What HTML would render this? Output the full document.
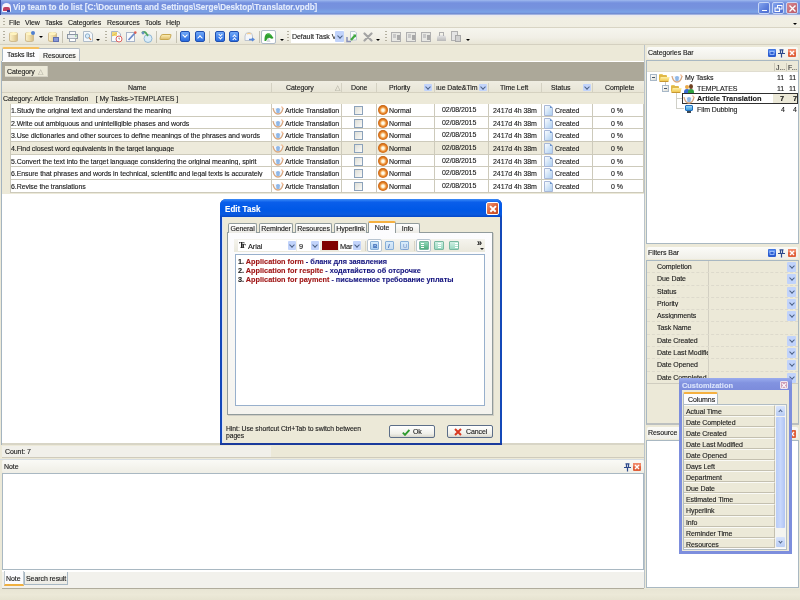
<!DOCTYPE html>
<html><head><meta charset="utf-8">
<style>
*{margin:0;padding:0;box-sizing:border-box}
html,body{width:800px;height:600px;overflow:hidden;background:#ECE9D8;font-family:"Liberation Sans",sans-serif;font-size:7px;letter-spacing:-0.08px;color:#1a1a1a;position:relative}
.a{position:absolute}
.t{position:absolute;white-space:nowrap;line-height:1;will-change:transform;-webkit-text-stroke:0.12px currentColor}
.b{font-weight:bold}
.grip{position:absolute;width:1.5px;background:repeating-linear-gradient(#B4B0A0 0 1px,transparent 1px 3px)}
.sep{position:absolute;width:1px;background:#C5C2B2}
.dd{position:absolute;width:0;height:0;border-left:2px solid transparent;border-right:2px solid transparent;border-top:2px solid #000}
.cbtn{position:absolute;background:#C1D3FB;border-radius:1px}
.cbtn:after{content:"";position:absolute;left:50%;top:50%;width:3px;height:3px;border-right:1.2px solid #4D6185;border-bottom:1.2px solid #4D6185;transform:translate(-50%,-75%) rotate(45deg)}
.wbtn{position:absolute;top:2px;width:12px;height:12px;border:1px solid #C8D6F6;border-radius:2px;background:linear-gradient(135deg,#86A6EE,#5A7CDA 60%,#5070D0)}
</style></head><body>

<!-- Title bar -->
<div class="a" style="left:0;top:0;width:800px;height:15px;background:linear-gradient(#A0BAEE 0,#86A2E6 1.5px,#7590DE 3px,#7692DE 8px,#7AA2E6 12px,#7898E0 13px,#6A84C8 14px,#D8E0F6 15px)">
  <div class="a" style="left:0;top:0;width:1px;height:15px;background:#3A4CA0"></div>
  <div class="a" style="left:2px;top:3px;width:9px;height:9px;background:#F8F4FC;border-radius:50% 50% 1px 1px"></div>
  <div class="a" style="left:3px;top:7px;width:7px;height:4px;background:#C04060;border-radius:2px 2px 0 0"></div>
  <div class="a" style="left:7px;top:10px;width:3px;height:2px;background:#303890"></div>
  <div class="t b" style="left:13px;top:2.5px;font-size:8.1px;letter-spacing:0;color:#E4ECFC;transform:scaleY(1.15);transform-origin:0 0">Vip team to do list [C:\Documents and Settings\Serge\Desktop\Translator.vpdb]</div>
  <div class="wbtn" style="left:758px"><div class="a" style="left:2.5px;top:6.5px;width:5px;height:1.6px;background:#fff"></div></div>
  <div class="wbtn" style="left:772px"><svg class="a" style="left:1px;top:1px" width="9" height="9" viewBox="0 0 9 9"><rect x="3.5" y="1.5" width="4.5" height="3.5" fill="none" stroke="#fff" stroke-width="1"/><rect x="1" y="4" width="4.5" height="3.5" fill="#6F90E0" stroke="#fff" stroke-width="1"/></svg></div>
  <div class="wbtn" style="left:786px;background:linear-gradient(135deg,#D88890,#B85868)"><svg class="a" style="left:1px;top:1px" width="9" height="9" viewBox="0 0 9 9"><path d="M1.5,1.5 L7.5,7.5 M7.5,1.5 L1.5,7.5" stroke="#fff" stroke-width="1.4"/></svg></div>
</div>
<!-- Menu -->
<div class="a" style="left:0;top:15px;width:800px;height:13px;background:linear-gradient(#E8E8F0,#F1EFE4 3px,#F0EEE2);border-bottom:1px solid #D8D4C4">
  <div class="grip" style="left:3px;top:3px;height:8px"></div>
  <div class="t" style="left:9px;top:3.5px">File</div>
  <div class="t" style="left:25px;top:3.5px">View</div>
  <div class="t" style="left:45px;top:3.5px">Tasks</div>
  <div class="t" style="left:68px;top:3.5px">Categories</div>
  <div class="t" style="left:107px;top:3.5px">Resources</div>
  <div class="t" style="left:145px;top:3.5px">Tools</div>
  <div class="t" style="left:166px;top:3.5px">Help</div>
  <div class="dd" style="left:793px;top:8px;border-width:2.5px 2.5px 0 2.5px"></div>
</div>
<div class="a" style="left:0;top:28px;width:800px;height:17px;background:linear-gradient(#F6F5EE,#F1EFE6 60%,#E8E5D6);border-bottom:1px solid #D4D0C0"></div>
<div class="grip" style="left:3px;top:31px;height:11px"></div>
<div class="a" style="left:9px;top:32px;width:9px;height:10px;border-radius:4px/2px;background:linear-gradient(to right,#FBF0C8,#EEDCA8 50%,#D8C088);border:1px solid #D0BC90"></div><div class="a" style="left:10px;top:32px;width:7px;height:3px;border-radius:50%;background:#FFF4C0"></div>
<div class="a" style="left:25px;top:32px;width:9px;height:10px;border-radius:4px/2px;background:linear-gradient(to right,#FBF0C8,#EEDCA8 50%,#D8C088);border:1px solid #D0BC90"></div><div class="a" style="left:26px;top:32px;width:7px;height:3px;border-radius:50%;background:#FFF4C0"></div><div class="a" style="left:31px;top:31px;width:4px;height:4px;background:#5080D0;border-radius:50%"></div>
<div class="dd" style="left:39px;top:36px;border-width:2px 2px 0 2px"></div>
<div class="a" style="left:48px;top:32px;width:9px;height:10px;border-radius:4px/2px;background:linear-gradient(to right,#FBF0C8,#EEDCA8 50%,#D8C088);border:1px solid #D0BC90"></div><div class="a" style="left:49px;top:32px;width:7px;height:3px;border-radius:50%;background:#FFF4C0"></div><div class="a" style="left:53px;top:37px;width:6px;height:5px;background:#8898D8;border:1px solid #6070B0"></div>
<div class="sep" style="left:62px;top:31px;height:12px"></div>
<svg class="a" style="left:67px;top:31px" width="11" height="11" viewBox="0 0 11 11"><rect x="2.5" y="0.5" width="6" height="3" fill="#FAFAFA" stroke="#A0A8B4"/><rect x="0.5" y="3.5" width="10" height="4" fill="#E8ECF0" stroke="#8C96A4"/><rect x="2.5" y="7.5" width="6" height="3" fill="#FFFFFF" stroke="#A0A8B4"/><rect x="8" y="4.5" width="1.5" height="1" fill="#60C060"/></svg>
<svg class="a" style="left:83px;top:31px" width="10" height="11" viewBox="0 0 10 11"><path d="M0.5,0.5 H7 L9.5,3 V10.5 H0.5 Z" fill="#F4F8FC" stroke="#B0BCC8"/><circle cx="4.5" cy="5" r="2.2" fill="#D8ECF8" stroke="#88A8C8" stroke-width="0.9"/><path d="M6,6.5 L8,9" stroke="#D08040" stroke-width="1.2"/></svg>
<div class="dd" style="left:96px;top:39px;border-width:2px 2px 0 2px"></div>
<div class="grip" style="left:105px;top:31px;height:11px"></div>
<svg class="a" style="left:111px;top:31px" width="12" height="12" viewBox="0 0 12 12"><path d="M0.5,0.5 H7 L9.5,3 V10.5 H0.5 Z" fill="#F8FAFC" stroke="#A8B4C4"/><rect x="1" y="1" width="5" height="4" fill="#F0D878"/><path d="M1,5 L6,2" stroke="#E8C050" stroke-width="1"/><circle cx="8" cy="8" r="3" fill="#FFFFFF" stroke="#E06060" stroke-width="1"/><path d="M8,6.5 V8 H9" stroke="#606060" stroke-width="0.6" fill="none"/></svg>
<svg class="a" style="left:126px;top:31px" width="11" height="11" viewBox="0 0 11 11"><rect x="0.5" y="1.5" width="8" height="9" fill="#F8FAFC" stroke="#A8B4C8"/><path d="M2.5,9 L9,2" stroke="#6A88C8" stroke-width="1.8"/><circle cx="9.3" cy="1.6" r="1.3" fill="#E06050"/></svg>
<svg class="a" style="left:141px;top:31px" width="12" height="12" viewBox="0 0 12 12"><ellipse cx="7" cy="7.5" rx="4" ry="4" fill="#D8ECF8" stroke="#88B0D0" stroke-width="0.9"/><path d="M1,2 Q3,0 5,2 L7,5" stroke="#50A860" stroke-width="1.8" fill="none"/><circle cx="2" cy="2" r="1.4" fill="#6890C0"/></svg>
<div class="sep" style="left:156px;top:31px;height:12px"></div>
<div class="a" style="left:160px;top:34px;width:11px;height:6px;background:linear-gradient(#FCECB0,#E0C070);border:1px solid #C8A850;border-radius:2px;transform:skewX(-20deg)"></div>
<div class="sep" style="left:176px;top:31px;height:12px"></div>
<div class="a" style="left:180px;top:31px;width:10px;height:11px;background:linear-gradient(#70A8F8,#2A6CE0);border:1px solid #2050B0;border-radius:2px"></div><div class="a" style="left:183px;top:33px;width:4px;height:4px;border-right:1.5px solid #fff;border-bottom:1.5px solid #fff;transform:rotate(45deg)"></div>
<div class="a" style="left:195px;top:31px;width:10px;height:11px;background:linear-gradient(#70A8F8,#2A6CE0);border:1px solid #2050B0;border-radius:2px"></div><div class="a" style="left:198px;top:36px;width:4px;height:4px;border-left:1.5px solid #fff;border-top:1.5px solid #fff;transform:rotate(45deg)"></div>
<div class="sep" style="left:209px;top:31px;height:12px"></div>
<div class="a" style="left:215px;top:31px;width:10px;height:11px;background:linear-gradient(#70A8F8,#2A6CE0);border:1px solid #2050B0;border-radius:2px"></div><div class="a" style="left:218.5px;top:33px;width:3px;height:3px;border-right:1.2px solid #fff;border-bottom:1.2px solid #fff;transform:rotate(45deg)"></div><div class="a" style="left:218.5px;top:36px;width:3px;height:3px;border-right:1.2px solid #fff;border-bottom:1.2px solid #fff;transform:rotate(45deg)"></div>
<div class="a" style="left:229px;top:31px;width:10px;height:11px;background:linear-gradient(#70A8F8,#2A6CE0);border:1px solid #2050B0;border-radius:2px"></div><div class="a" style="left:232.5px;top:35px;width:3px;height:3px;border-left:1.2px solid #fff;border-top:1.2px solid #fff;transform:rotate(45deg)"></div><div class="a" style="left:232.5px;top:38px;width:3px;height:3px;border-left:1.2px solid #fff;border-top:1.2px solid #fff;transform:rotate(45deg)"></div>
<svg class="a" style="left:244px;top:32px" width="11" height="10" viewBox="0 0 11 10"><path d="M1,4 Q1,0.5 5,0.5 Q8.5,0.5 8.5,4 V8.5 H1 Z" fill="#F4F6FA" stroke="#B8C0CC" stroke-width="0.9"/><path d="M3,2 Q5,0.8 7,2" stroke="#F8D090" stroke-width="1.4" fill="none"/><path d="M5,7.5 H9.5 M8,6 L10,7.5 L8,9" stroke="#5888D8" stroke-width="1.3" fill="none"/></svg>
<div class="sep" style="left:259px;top:31px;height:12px"></div>
<div class="a" style="left:261px;top:30px;width:15px;height:14px;background:#FFFFFF;border:1px solid #B0BCC8;border-radius:2px"></div>
<svg class="a" style="left:263px;top:32px" width="11" height="10" viewBox="0 0 11 10"><path d="M3.5,10 L5.5,5 L7.5,10 Z" fill="#D8DCE0"/><path d="M1.5,9 Q1,3 4,1.5 Q6,0.5 8,2.5 L10.5,6 Q9,7.5 7,6 Q5,4.5 3,9 Z" fill="#30A030"/><path d="M4,2 Q6,1 8,3" stroke="#70D070" stroke-width="0.8" fill="none"/></svg>
<div class="dd" style="left:280px;top:39px;border-width:2px 2px 0 2px"></div>
<div class="grip" style="left:287px;top:31px;height:11px"></div>
<div class="a" style="left:291px;top:30px;width:53px;height:13px;background:#FFFFFF"></div>
<div class="t" style="left:292px;top:33px;letter-spacing:-0.05px;width:43px;overflow:hidden">Default Task View</div>
<div class="cbtn" style="left:335px;top:31px;width:9px;height:11px"></div>
<svg class="a" style="left:346px;top:31px" width="11" height="12" viewBox="0 0 11 12"><path d="M4.5,0.5 H9 L10.5,2 V9 H4.5 Z" fill="#F8FAFC" stroke="#B8C4D0" stroke-width="0.9"/><path d="M5,9 L9,4.5" stroke="#40A840" stroke-width="2.2"/><path d="M7,3.5 H10 V6.5" fill="#40A840"/><path d="M1,6 V10.5 H5" stroke="#8890B8" stroke-width="1.5" fill="none"/></svg>
<svg class="a" style="left:363px;top:32px" width="10" height="10" viewBox="0 0 10 10"><path d="M1.5,1.5 L8.5,8.5 M8.5,1.5 L1.5,8.5" stroke="#A4A4A4" stroke-width="2.2" stroke-linecap="round"/></svg>
<div class="dd" style="left:376px;top:39px;border-width:2px 2px 0 2px"></div>
<div class="grip" style="left:385px;top:31px;height:11px"></div>
<div class="a" style="left:391px;top:32px;width:10px;height:10px;background:#E8E8E4;border:1px solid #B0B0B0"></div><div class="a" style="left:393px;top:34px;width:3px;height:4px;background:#C8C8C8"></div><div class="a" style="left:397px;top:35px;width:3px;height:5px;background:#A8A8A8"></div>
<div class="a" style="left:406px;top:32px;width:10px;height:10px;background:#E8E8E4;border:1px solid #B0B0B0"></div><div class="a" style="left:408px;top:34px;width:3px;height:4px;background:#C8C8C8"></div><div class="a" style="left:412px;top:35px;width:3px;height:5px;background:#A8A8A8"></div>
<div class="a" style="left:421px;top:32px;width:10px;height:10px;background:#E8E8E4;border:1px solid #B0B0B0"></div><div class="a" style="left:423px;top:34px;width:3px;height:4px;background:#C8C8C8"></div><div class="a" style="left:427px;top:35px;width:3px;height:5px;background:#A8A8A8"></div>
<div class="a" style="left:437px;top:35px;width:9px;height:6px;background:linear-gradient(#E8E8E8,#B8B8B8);border-radius:3px 3px 0 0"></div><div class="a" style="left:439px;top:32px;width:5px;height:4px;border:1px solid #B0B0B0;border-bottom:none"></div>
<div class="a" style="left:451px;top:31px;width:7px;height:10px;background:#E4E4E4;border:1px solid #B0B0B0"></div><div class="a" style="left:455px;top:35px;width:6px;height:7px;background:#D0D0D0;border:1px solid #A8A8A8"></div>
<div class="dd" style="left:466px;top:39px;border-width:2px 2px 0 2px"></div>
<!-- LEFT MAIN AREA -->
<div class="a" style="left:0;top:45px;width:645px;height:400px;background:#ECE9D8"></div>
<div class="a" style="left:2px;top:47px;width:38px;height:15px;background:#FCFCFE;border:1px solid #A8B8C4;border-bottom:none;border-top:2px solid #F5C060;border-radius:2px 2px 0 0"></div>
<div class="t" style="left:7px;top:51px">Tasks list</div>
<div class="a" style="left:39px;top:48px;width:41px;height:13px;background:linear-gradient(#FEFEFE,#F2F1EA);border:1px solid #B4BCC4;border-bottom:none;border-left:none;border-radius:0 2px 0 0"></div>
<div class="t" style="left:43px;top:52px">Resources</div>
<div class="a" style="left:1px;top:61px;width:1px;height:384px;background:#A4B4C0"></div>
<div class="a" style="left:2px;top:61px;width:643px;height:1px;background:#FFFFFF"></div>
<div class="a" style="left:2px;top:62px;width:642px;height:19px;background:#ACA899"></div>
<div class="a" style="left:5px;top:66px;width:43px;height:11px;background:#ECE9D8;border-right:1px solid #D6D3C6;border-bottom:1px solid #D6D3C6"></div>
<div class="t" style="left:7px;top:68px">Category</div>
<div class="t" style="left:38px;top:68px;color:#B8B6A8;font-size:7px">&#9651;</div>
<div class="a" style="left:2px;top:81px;width:642px;height:12px;background:linear-gradient(#EFEDE2,#E8E5D6);border-bottom:1px solid #D5D1C0"></div>
<svg width="0" height="0" style="position:absolute"><defs><linearGradient id="dg" x1="0" y1="0" x2="1" y2="1"><stop offset="0" stop-color="#FFFFFF"/><stop offset="1" stop-color="#A8CCF0"/></linearGradient></defs></svg>
<div class="a" style="left:271px;top:83px;width:1px;height:9px;background:#D4D1C2"></div>
<div class="a" style="left:341px;top:83px;width:1px;height:9px;background:#D4D1C2"></div>
<div class="a" style="left:376px;top:83px;width:1px;height:9px;background:#D4D1C2"></div>
<div class="a" style="left:434px;top:83px;width:1px;height:9px;background:#D4D1C2"></div>
<div class="a" style="left:488px;top:83px;width:1px;height:9px;background:#D4D1C2"></div>
<div class="a" style="left:541px;top:83px;width:1px;height:9px;background:#D4D1C2"></div>
<div class="a" style="left:592px;top:83px;width:1px;height:9px;background:#D4D1C2"></div>
<div class="t" style="left:128px;top:84px">Name</div>
<div class="t" style="left:286px;top:84px">Category</div>
<div class="t" style="left:351px;top:84px">Done</div>
<div class="t" style="left:389px;top:84px">Priority</div>
<div class="t" style="left:436px;top:84px">ıue Date&amp;Tim</div>
<div class="t" style="left:500px;top:84px">Time Left</div>
<div class="t" style="left:551px;top:84px">Status</div>
<div class="t" style="left:605px;top:84px">Complete</div>
<div class="t" style="left:335px;top:84px;color:#B8B6A8;font-size:7px">&#9651;</div>
<div class="cbtn" style="left:423.5px;top:84px;width:8.5px;height:7px"></div>
<div class="cbtn" style="left:478.5px;top:84px;width:8.5px;height:7px"></div>
<div class="cbtn" style="left:582.5px;top:84px;width:8.5px;height:7px"></div>
<div class="a" style="left:2px;top:93px;width:642px;height:11px;background:#ECE9D8"></div>
<div class="t" style="left:3px;top:95px">Category: Article Translation&nbsp;&nbsp;&nbsp; [ My Tasks-&gt;TEMPLATES ]</div>
<div class="a" style="left:10px;top:104px;width:634px;height:13px;background:#FFFFFF;border-bottom:1px solid #CDCABB"></div>
<div class="t" style="left:11px;top:107px;width:259px;overflow:hidden">1.Study the original text and understand the meaning</div>
<svg class="a" style="left:272px;top:106px" width="12" height="9" viewBox="0 0 12 9"><path d="M1,2 Q2,8 6,8 Q10,8 11,2" fill="#F4F6FA" stroke="#D8A880" stroke-width="1.3"/><path d="M4,3 Q6,1 8,3 L7.5,7 L4.5,7 Z" fill="#90B8E8"/><path d="M9,1 Q11,0 11,3" fill="none" stroke="#F0B890" stroke-width="1"/></svg>
<div class="t" style="left:285px;top:107px">Article Translation</div>
<div class="a" style="left:354px;top:106px;width:9px;height:9px;border:1px solid #8CA2BA;background:linear-gradient(135deg,#DEDED6,#FAFAF8)"></div>
<div class="a" style="left:378px;top:105px;width:10px;height:10px;border-radius:50%;background:radial-gradient(circle at 50% 52%,#FFFBE8 0 1.2px,#F8C080 2.2px,#E88A30 3.2px,#D87018 4.2px,#C06010 5px)"></div>
<div class="t" style="left:389px;top:107px">Normal</div>
<div class="t" style="left:442px;top:106px">02/08/2015</div>
<div class="t" style="left:493px;top:107px">2417d 4h 38m</div>
<svg class="a" style="left:544px;top:105px" width="9" height="11" viewBox="0 0 9 11"><path d="M0.5,0.5 H6 L8.5,3 V10.5 H0.5 Z" fill="url(#dg)" stroke="#A8B8D8" stroke-width="1"/><path d="M6,0.5 V3 H8.5 Z" fill="#6890C8"/></svg>
<div class="t" style="left:555px;top:107px">Created</div>
<div class="t" style="left:611px;top:107px">0 %</div>
<div class="a" style="left:10px;top:117px;width:634px;height:12px;background:#FFFFFF;border-bottom:1px solid #CDCABB"></div>
<div class="t" style="left:11px;top:120px;width:259px;overflow:hidden">2.Write out ambiguous and unintelligible phases and words</div>
<svg class="a" style="left:272px;top:119px" width="12" height="9" viewBox="0 0 12 9"><path d="M1,2 Q2,8 6,8 Q10,8 11,2" fill="#F4F6FA" stroke="#D8A880" stroke-width="1.3"/><path d="M4,3 Q6,1 8,3 L7.5,7 L4.5,7 Z" fill="#90B8E8"/><path d="M9,1 Q11,0 11,3" fill="none" stroke="#F0B890" stroke-width="1"/></svg>
<div class="t" style="left:285px;top:120px">Article Translation</div>
<div class="a" style="left:354px;top:119px;width:9px;height:9px;border:1px solid #8CA2BA;background:linear-gradient(135deg,#DEDED6,#FAFAF8)"></div>
<div class="a" style="left:378px;top:118px;width:10px;height:10px;border-radius:50%;background:radial-gradient(circle at 50% 52%,#FFFBE8 0 1.2px,#F8C080 2.2px,#E88A30 3.2px,#D87018 4.2px,#C06010 5px)"></div>
<div class="t" style="left:389px;top:120px">Normal</div>
<div class="t" style="left:442px;top:119px">02/08/2015</div>
<div class="t" style="left:493px;top:120px">2417d 4h 38m</div>
<svg class="a" style="left:544px;top:118px" width="9" height="11" viewBox="0 0 9 11"><path d="M0.5,0.5 H6 L8.5,3 V10.5 H0.5 Z" fill="url(#dg)" stroke="#A8B8D8" stroke-width="1"/><path d="M6,0.5 V3 H8.5 Z" fill="#6890C8"/></svg>
<div class="t" style="left:555px;top:120px">Created</div>
<div class="t" style="left:611px;top:120px">0 %</div>
<div class="a" style="left:10px;top:129px;width:634px;height:13px;background:#FFFFFF;border-bottom:1px solid #CDCABB"></div>
<div class="t" style="left:11px;top:132px;width:259px;overflow:hidden">3.Use dictionaries and other sources to define meanings of the phrases and words</div>
<svg class="a" style="left:272px;top:131px" width="12" height="9" viewBox="0 0 12 9"><path d="M1,2 Q2,8 6,8 Q10,8 11,2" fill="#F4F6FA" stroke="#D8A880" stroke-width="1.3"/><path d="M4,3 Q6,1 8,3 L7.5,7 L4.5,7 Z" fill="#90B8E8"/><path d="M9,1 Q11,0 11,3" fill="none" stroke="#F0B890" stroke-width="1"/></svg>
<div class="t" style="left:285px;top:132px">Article Translation</div>
<div class="a" style="left:354px;top:131px;width:9px;height:9px;border:1px solid #8CA2BA;background:linear-gradient(135deg,#DEDED6,#FAFAF8)"></div>
<div class="a" style="left:378px;top:130px;width:10px;height:10px;border-radius:50%;background:radial-gradient(circle at 50% 52%,#FFFBE8 0 1.2px,#F8C080 2.2px,#E88A30 3.2px,#D87018 4.2px,#C06010 5px)"></div>
<div class="t" style="left:389px;top:132px">Normal</div>
<div class="t" style="left:442px;top:131px">02/08/2015</div>
<div class="t" style="left:493px;top:132px">2417d 4h 38m</div>
<svg class="a" style="left:544px;top:130px" width="9" height="11" viewBox="0 0 9 11"><path d="M0.5,0.5 H6 L8.5,3 V10.5 H0.5 Z" fill="url(#dg)" stroke="#A8B8D8" stroke-width="1"/><path d="M6,0.5 V3 H8.5 Z" fill="#6890C8"/></svg>
<div class="t" style="left:555px;top:132px">Created</div>
<div class="t" style="left:611px;top:132px">0 %</div>
<div class="a" style="left:10px;top:142px;width:634px;height:13px;background:#EDEADB;border-bottom:1px solid #CDCABB"></div>
<div class="t" style="left:11px;top:145px;width:259px;overflow:hidden">4.Find closest word equivalents in the target language</div>
<svg class="a" style="left:272px;top:144px" width="12" height="9" viewBox="0 0 12 9"><path d="M1,2 Q2,8 6,8 Q10,8 11,2" fill="#F4F6FA" stroke="#D8A880" stroke-width="1.3"/><path d="M4,3 Q6,1 8,3 L7.5,7 L4.5,7 Z" fill="#90B8E8"/><path d="M9,1 Q11,0 11,3" fill="none" stroke="#F0B890" stroke-width="1"/></svg>
<div class="t" style="left:285px;top:145px">Article Translation</div>
<div class="a" style="left:354px;top:144px;width:9px;height:9px;border:1px solid #8CA2BA;background:linear-gradient(135deg,#DEDED6,#FAFAF8)"></div>
<div class="a" style="left:378px;top:143px;width:10px;height:10px;border-radius:50%;background:radial-gradient(circle at 50% 52%,#FFFBE8 0 1.2px,#F8C080 2.2px,#E88A30 3.2px,#D87018 4.2px,#C06010 5px)"></div>
<div class="t" style="left:389px;top:145px">Normal</div>
<div class="t" style="left:442px;top:144px">02/08/2015</div>
<div class="t" style="left:493px;top:145px">2417d 4h 38m</div>
<svg class="a" style="left:544px;top:143px" width="9" height="11" viewBox="0 0 9 11"><path d="M0.5,0.5 H6 L8.5,3 V10.5 H0.5 Z" fill="url(#dg)" stroke="#A8B8D8" stroke-width="1"/><path d="M6,0.5 V3 H8.5 Z" fill="#6890C8"/></svg>
<div class="t" style="left:555px;top:145px">Created</div>
<div class="t" style="left:611px;top:145px">0 %</div>
<div class="a" style="left:10px;top:155px;width:634px;height:12px;background:#FFFFFF;border-bottom:1px solid #CDCABB"></div>
<div class="t" style="left:11px;top:158px;width:259px;overflow:hidden">5.Convert the text into the target language considering the original meaning, spirit</div>
<svg class="a" style="left:272px;top:157px" width="12" height="9" viewBox="0 0 12 9"><path d="M1,2 Q2,8 6,8 Q10,8 11,2" fill="#F4F6FA" stroke="#D8A880" stroke-width="1.3"/><path d="M4,3 Q6,1 8,3 L7.5,7 L4.5,7 Z" fill="#90B8E8"/><path d="M9,1 Q11,0 11,3" fill="none" stroke="#F0B890" stroke-width="1"/></svg>
<div class="t" style="left:285px;top:158px">Article Translation</div>
<div class="a" style="left:354px;top:157px;width:9px;height:9px;border:1px solid #8CA2BA;background:linear-gradient(135deg,#DEDED6,#FAFAF8)"></div>
<div class="a" style="left:378px;top:156px;width:10px;height:10px;border-radius:50%;background:radial-gradient(circle at 50% 52%,#FFFBE8 0 1.2px,#F8C080 2.2px,#E88A30 3.2px,#D87018 4.2px,#C06010 5px)"></div>
<div class="t" style="left:389px;top:158px">Normal</div>
<div class="t" style="left:442px;top:157px">02/08/2015</div>
<div class="t" style="left:493px;top:158px">2417d 4h 38m</div>
<svg class="a" style="left:544px;top:156px" width="9" height="11" viewBox="0 0 9 11"><path d="M0.5,0.5 H6 L8.5,3 V10.5 H0.5 Z" fill="url(#dg)" stroke="#A8B8D8" stroke-width="1"/><path d="M6,0.5 V3 H8.5 Z" fill="#6890C8"/></svg>
<div class="t" style="left:555px;top:158px">Created</div>
<div class="t" style="left:611px;top:158px">0 %</div>
<div class="a" style="left:10px;top:167px;width:634px;height:13px;background:#FFFFFF;border-bottom:1px solid #CDCABB"></div>
<div class="t" style="left:11px;top:170px;width:259px;overflow:hidden">6.Ensure that phrases and words in technical, scientific and legal texts is accurately</div>
<svg class="a" style="left:272px;top:169px" width="12" height="9" viewBox="0 0 12 9"><path d="M1,2 Q2,8 6,8 Q10,8 11,2" fill="#F4F6FA" stroke="#D8A880" stroke-width="1.3"/><path d="M4,3 Q6,1 8,3 L7.5,7 L4.5,7 Z" fill="#90B8E8"/><path d="M9,1 Q11,0 11,3" fill="none" stroke="#F0B890" stroke-width="1"/></svg>
<div class="t" style="left:285px;top:170px">Article Translation</div>
<div class="a" style="left:354px;top:169px;width:9px;height:9px;border:1px solid #8CA2BA;background:linear-gradient(135deg,#DEDED6,#FAFAF8)"></div>
<div class="a" style="left:378px;top:168px;width:10px;height:10px;border-radius:50%;background:radial-gradient(circle at 50% 52%,#FFFBE8 0 1.2px,#F8C080 2.2px,#E88A30 3.2px,#D87018 4.2px,#C06010 5px)"></div>
<div class="t" style="left:389px;top:170px">Normal</div>
<div class="t" style="left:442px;top:169px">02/08/2015</div>
<div class="t" style="left:493px;top:170px">2417d 4h 38m</div>
<svg class="a" style="left:544px;top:168px" width="9" height="11" viewBox="0 0 9 11"><path d="M0.5,0.5 H6 L8.5,3 V10.5 H0.5 Z" fill="url(#dg)" stroke="#A8B8D8" stroke-width="1"/><path d="M6,0.5 V3 H8.5 Z" fill="#6890C8"/></svg>
<div class="t" style="left:555px;top:170px">Created</div>
<div class="t" style="left:611px;top:170px">0 %</div>
<div class="a" style="left:10px;top:180px;width:634px;height:13px;background:#FFFFFF;border-bottom:1px solid #CDCABB"></div>
<div class="t" style="left:11px;top:183px;width:259px;overflow:hidden">6.Revise the translations</div>
<svg class="a" style="left:272px;top:182px" width="12" height="9" viewBox="0 0 12 9"><path d="M1,2 Q2,8 6,8 Q10,8 11,2" fill="#F4F6FA" stroke="#D8A880" stroke-width="1.3"/><path d="M4,3 Q6,1 8,3 L7.5,7 L4.5,7 Z" fill="#90B8E8"/><path d="M9,1 Q11,0 11,3" fill="none" stroke="#F0B890" stroke-width="1"/></svg>
<div class="t" style="left:285px;top:183px">Article Translation</div>
<div class="a" style="left:354px;top:182px;width:9px;height:9px;border:1px solid #8CA2BA;background:linear-gradient(135deg,#DEDED6,#FAFAF8)"></div>
<div class="a" style="left:378px;top:181px;width:10px;height:10px;border-radius:50%;background:radial-gradient(circle at 50% 52%,#FFFBE8 0 1.2px,#F8C080 2.2px,#E88A30 3.2px,#D87018 4.2px,#C06010 5px)"></div>
<div class="t" style="left:389px;top:183px">Normal</div>
<div class="t" style="left:442px;top:182px">02/08/2015</div>
<div class="t" style="left:493px;top:183px">2417d 4h 38m</div>
<svg class="a" style="left:544px;top:181px" width="9" height="11" viewBox="0 0 9 11"><path d="M0.5,0.5 H6 L8.5,3 V10.5 H0.5 Z" fill="url(#dg)" stroke="#A8B8D8" stroke-width="1"/><path d="M6,0.5 V3 H8.5 Z" fill="#6890C8"/></svg>
<div class="t" style="left:555px;top:183px">Created</div>
<div class="t" style="left:611px;top:183px">0 %</div>
<div class="a" style="left:271px;top:104px;width:1px;height:89px;background:#CDCABB"></div>
<div class="a" style="left:341px;top:104px;width:1px;height:89px;background:#CDCABB"></div>
<div class="a" style="left:376px;top:104px;width:1px;height:89px;background:#CDCABB"></div>
<div class="a" style="left:434px;top:104px;width:1px;height:89px;background:#CDCABB"></div>
<div class="a" style="left:488px;top:104px;width:1px;height:89px;background:#CDCABB"></div>
<div class="a" style="left:541px;top:104px;width:1px;height:89px;background:#CDCABB"></div>
<div class="a" style="left:592px;top:104px;width:1px;height:89px;background:#CDCABB"></div>
<div class="a" style="left:10px;top:104px;width:1px;height:89px;background:#CDCABB"></div>
<div class="a" style="left:643px;top:104px;width:1px;height:89px;background:#CDCABB"></div>
<div class="a" style="left:2px;top:194px;width:642px;height:250px;background:#FFFFFF"></div><div class="a" style="left:2px;top:443px;width:642px;height:2px;background:#D8D5C6"></div>
<div class="a" style="left:2px;top:445px;width:642px;height:13px;background:#ECE9D8;border-bottom:1px solid #CFCBBC"></div>
<div class="a" style="left:2px;top:446px;width:269px;height:11px;background:#F1F0EA"></div>
<div class="t" style="left:5px;top:448px">Count: 7</div>
<div class="a" style="left:0px;top:459px;width:644px;height:1px;background:#D6DDE2"></div>
<div class="a" style="left:2px;top:460px;width:642px;height:13px;background:linear-gradient(#FAFAF6,#EFEEE6);border-radius:2px"></div>
<div class="t" style="left:4px;top:463px">Note</div>
<svg class="a" style="left:623px;top:463px" width="9" height="9" viewBox="0 0 9 9"><path d="M2.5,0.8 H6.5 M3.5,1 V4 M5.5,1 V4 M1,4.5 H8 M4.5,4.5 V8.5" stroke="#2E4A8C" stroke-width="1.2" fill="none"/></svg>
<svg class="a" style="left:633px;top:463px" width="8" height="8" viewBox="0 0 8 8"><rect x="0" y="0" width="8" height="8" rx="1" fill="#E0603A"/><rect x="0" y="0" width="8" height="3.5" rx="1" fill="#F08868"/><path d="M2,2 L6,6 M6,2 L2,6" stroke="#FFFFFF" stroke-width="1.4"/></svg>
<div class="a" style="left:2px;top:572px;width:642px;height:1px;background:#D8D6CC"></div>
<div class="a" style="left:2px;top:473px;width:642px;height:97px;background:#FFFFFF;border:1px solid #A9B8C2"></div>
<div class="a" style="left:2px;top:570px;width:642px;height:19px;background:#F2F1EC;border-top:2px solid #FFFFFF;border-bottom:1px solid #B0AC9C"></div>
<div class="a" style="left:4px;top:571px;width:20px;height:15px;background:#FCFCFE;border:1px solid #C0CAD0;border-top:none;border-bottom:2px solid #F0B040"></div>
<div class="t" style="left:6px;top:575px">Note</div>
<div class="a" style="left:24px;top:572px;width:44px;height:13px;background:linear-gradient(#F8F8F4,#ECEBE4);border:1px solid #A8B8C4;border-top:none"></div>
<div class="t" style="left:26px;top:575px">Search result</div>
<div class="a" style="left:0px;top:589px;width:800px;height:11px;background:linear-gradient(#E8E5D4,#ECE9D8 50%,#E6E3D0)"></div><div class="a" style="left:644px;top:45px;width:1px;height:543px;background:#B9C3CB"></div>
<div class="a" style="left:647px;top:47px;width:151px;height:12px;background:linear-gradient(#FBFBF8,#F0EFE8);border-radius:2px"></div><div class="t" style="left:648px;top:49px">Categories Bar</div><svg class="a" style="left:768px;top:49px" width="8" height="8" viewBox="0 0 8 8"><rect x="0" y="0" width="8" height="8" rx="1.2" fill="#2A5CD0"/><rect x="0.6" y="0.6" width="6.8" height="3.5" rx="1" fill="#5C90F0"/><rect x="2" y="2.5" width="4" height="3" fill="#3060D0" stroke="#A8C8FF" stroke-width="0.8"/></svg><svg class="a" style="left:777px;top:49px" width="9" height="9" viewBox="0 0 9 9"><path d="M2.5,0.8 H6.5 M3.5,1 V4 M5.5,1 V4 M1,4.5 H8 M4.5,4.5 V8.5" stroke="#2E4A8C" stroke-width="1.2" fill="none"/></svg><svg class="a" style="left:788px;top:49px" width="8" height="8" viewBox="0 0 8 8"><rect x="0" y="0" width="8" height="8" rx="1" fill="#E0603A"/><rect x="0" y="0" width="8" height="3.5" rx="1" fill="#F08868"/><path d="M2,2 L6,6 M6,2 L2,6" stroke="#FFFFFF" stroke-width="1.4"/></svg>
<div class="a" style="left:646px;top:60px;width:153px;height:184px;background:#FFFFFF;border:1px solid #A9B8C2"></div>
<div class="a" style="left:647px;top:61px;width:151px;height:11px;background:#ECE9D8;border-bottom:1px solid #E0DDD0"></div>
<div class="a" style="left:774px;top:63px;width:1px;height:8px;background:#CBC7B8"></div><div class="a" style="left:786px;top:63px;width:1px;height:8px;background:#CBC7B8"></div>
<div class="t" style="left:776px;top:64px;color:#333">J...</div><div class="t" style="left:788px;top:64px;color:#333">F...</div>
<div class="a" style="left:653px;top:80px;width:0;height:0"></div>
<div class="a" style="left:665px;top:81px;width:1px;height:4px;background:#C8C8C0"></div>
<div class="a" style="left:676px;top:92px;width:1px;height:17px;background:#D0D0C8"></div>
<div class="a" style="left:677px;top:98px;width:6px;height:1px;background:#D0D0C8"></div>
<div class="a" style="left:677px;top:108px;width:7px;height:1px;background:#D0D0C8"></div>
<div class="a" style="left:650px;top:74px;width:7px;height:7px;border:1px solid #A8B8C8;background:linear-gradient(135deg,#FFFFFF,#DCDCD4)"><div class="a" style="left:1px;top:2px;width:3px;height:1px;background:#44546A"></div></div>
<div class="a" style="left:659px;top:74px;width:4px;height:2px;background:#E8C860;border-radius:1px 1px 0 0"></div><div class="a" style="left:659px;top:75px;width:8px;height:6px;background:#E0B848;border-radius:0 1px 1px 1px"></div><div class="a" style="left:660px;top:77px;width:9px;height:5px;background:linear-gradient(#FFF0A8,#F0C850);transform:skewX(-15deg);border-bottom:1px solid #C89830"></div>
<svg class="a" style="left:671px;top:74px" width="12" height="9" viewBox="0 0 12 9"><path d="M1,2 Q2,8 6,8 Q10,8 11,2" fill="#F4F6FA" stroke="#D8A880" stroke-width="1.3"/><path d="M4,3 Q6,1 8,3 L7.5,7 L4.5,7 Z" fill="#90B8E8"/><path d="M9,1 Q11,0 11,3" fill="none" stroke="#F0B890" stroke-width="1"/></svg>
<div class="t" style="left:685px;top:74px">My Tasks</div>
<div class="a" style="left:662px;top:85px;width:7px;height:7px;border:1px solid #A8B8C8;background:linear-gradient(135deg,#FFFFFF,#DCDCD4)"><div class="a" style="left:1px;top:2px;width:3px;height:1px;background:#44546A"></div></div>
<div class="a" style="left:671px;top:85px;width:4px;height:2px;background:#E8C860;border-radius:1px 1px 0 0"></div><div class="a" style="left:671px;top:86px;width:8px;height:6px;background:#E0B848;border-radius:0 1px 1px 1px"></div><div class="a" style="left:672px;top:88px;width:9px;height:5px;background:linear-gradient(#FFF0A8,#F0C850);transform:skewX(-15deg);border-bottom:1px solid #C89830"></div>
<div class="a" style="left:684px;top:89px;width:6px;height:4px;border-radius:3px 3px 0 0;background:#3A6AD0"></div><div class="a" style="left:685px;top:85px;width:4px;height:4px;border-radius:50%;background:#E8A848"></div>
<div class="a" style="left:688px;top:89px;width:6px;height:4px;border-radius:3px 3px 0 0;background:#30A040"></div><div class="a" style="left:689px;top:84px;width:4px;height:5px;border-radius:50%;background:#704020"></div>
<div class="t" style="left:697px;top:85px">TEMPLATES</div>
<div class="t" style="left:777px;top:74px">11</div><div class="t" style="left:789px;top:74px">11</div>
<div class="t" style="left:777px;top:85px">11</div><div class="t" style="left:789px;top:85px">11</div>
<div class="a" style="left:682px;top:93px;width:116px;height:11px;border:1px solid #303030;background:#FFFFFF"></div>
<div class="a" style="left:773px;top:94px;width:24px;height:9px;background:#ECE9D8"></div>
<svg class="a" style="left:683px;top:95px" width="12" height="9" viewBox="0 0 12 9"><path d="M1,2 Q2,8 6,8 Q10,8 11,2" fill="#F4F6FA" stroke="#D8A880" stroke-width="1.3"/><path d="M4,3 Q6,1 8,3 L7.5,7 L4.5,7 Z" fill="#90B8E8"/><path d="M9,1 Q11,0 11,3" fill="none" stroke="#F0B890" stroke-width="1"/></svg>
<div class="t b" style="left:697px;top:95px;font-size:7.4px;letter-spacing:0">Article Translation</div>
<div class="t b" style="left:780px;top:95px;font-size:7.4px">7</div><div class="t b" style="left:793px;top:95px;font-size:7.4px">7</div>
<div class="a" style="left:685px;top:105px;width:8px;height:6px;border:1px solid #2070C0;background:linear-gradient(#A0D8F8,#40A0E0);border-radius:1px"></div><div class="a" style="left:687px;top:111px;width:4px;height:2px;background:#404850"></div>
<div class="t" style="left:697px;top:106px">Film Dubbing</div>
<div class="t" style="left:780.5px;top:106px">4</div><div class="t" style="left:793px;top:106px">4</div>
<div class="a" style="left:647px;top:247px;width:151px;height:12px;background:linear-gradient(#FBFBF8,#F0EFE8);border-radius:2px"></div><div class="t" style="left:648px;top:249px">Filters Bar</div><svg class="a" style="left:768px;top:249px" width="8" height="8" viewBox="0 0 8 8"><rect x="0" y="0" width="8" height="8" rx="1.2" fill="#2A5CD0"/><rect x="0.6" y="0.6" width="6.8" height="3.5" rx="1" fill="#5C90F0"/><rect x="2" y="2.5" width="4" height="3" fill="#3060D0" stroke="#A8C8FF" stroke-width="0.8"/></svg><svg class="a" style="left:777px;top:249px" width="9" height="9" viewBox="0 0 9 9"><path d="M2.5,0.8 H6.5 M3.5,1 V4 M5.5,1 V4 M1,4.5 H8 M4.5,4.5 V8.5" stroke="#2E4A8C" stroke-width="1.2" fill="none"/></svg><svg class="a" style="left:788px;top:249px" width="8" height="8" viewBox="0 0 8 8"><rect x="0" y="0" width="8" height="8" rx="1" fill="#E0603A"/><rect x="0" y="0" width="8" height="3.5" rx="1" fill="#F08868"/><path d="M2,2 L6,6 M6,2 L2,6" stroke="#FFFFFF" stroke-width="1.4"/></svg>
<div class="a" style="left:646px;top:260px;width:153px;height:165px;background:#ECE9D8;border:1px solid #A9B8C2;border-bottom:2px solid #BCC0C0"></div>
<div class="a" style="left:708px;top:261px;width:1px;height:123px;background:#D2CFC2"></div>
<div class="t" style="left:657px;top:263px;width:51px;overflow:hidden">Completion</div>
<div class="a" style="left:647px;top:272px;width:151px;height:0;border-top:1px dashed #DDDACC"></div>
<div class="cbtn" style="left:787px;top:262px;width:9px;height:10px"></div>
<div class="t" style="left:657px;top:275px;width:51px;overflow:hidden">Due Date</div>
<div class="a" style="left:647px;top:285px;width:151px;height:0;border-top:1px dashed #DDDACC"></div>
<div class="cbtn" style="left:787px;top:274px;width:9px;height:10px"></div>
<div class="t" style="left:657px;top:288px;width:51px;overflow:hidden">Status</div>
<div class="a" style="left:647px;top:297px;width:151px;height:0;border-top:1px dashed #DDDACC"></div>
<div class="cbtn" style="left:787px;top:287px;width:9px;height:10px"></div>
<div class="t" style="left:657px;top:300px;width:51px;overflow:hidden">Priority</div>
<div class="a" style="left:647px;top:309px;width:151px;height:0;border-top:1px dashed #DDDACC"></div>
<div class="cbtn" style="left:787px;top:299px;width:9px;height:10px"></div>
<div class="t" style="left:657px;top:312px;width:51px;overflow:hidden">Assignments</div>
<div class="a" style="left:647px;top:321px;width:151px;height:0;border-top:1px dashed #DDDACC"></div>
<div class="cbtn" style="left:787px;top:311px;width:9px;height:10px"></div>
<div class="t" style="left:657px;top:324px;width:51px;overflow:hidden">Task Name</div>
<div class="a" style="left:647px;top:334px;width:151px;height:0;border-top:1px dashed #DDDACC"></div>
<div class="t" style="left:657px;top:337px;width:51px;overflow:hidden">Date Created</div>
<div class="a" style="left:647px;top:346px;width:151px;height:0;border-top:1px dashed #DDDACC"></div>
<div class="cbtn" style="left:787px;top:336px;width:9px;height:10px"></div>
<div class="t" style="left:657px;top:349px;width:51px;overflow:hidden">Date Last Modifie</div>
<div class="a" style="left:647px;top:358px;width:151px;height:0;border-top:1px dashed #DDDACC"></div>
<div class="cbtn" style="left:787px;top:348px;width:9px;height:10px"></div>
<div class="t" style="left:657px;top:361px;width:51px;overflow:hidden">Date Opened</div>
<div class="a" style="left:647px;top:371px;width:151px;height:0;border-top:1px dashed #DDDACC"></div>
<div class="cbtn" style="left:787px;top:360px;width:9px;height:10px"></div>
<div class="t" style="left:657px;top:374px;width:51px;overflow:hidden">Date Completed</div>
<div class="a" style="left:647px;top:383px;width:151px;height:0;border-top:1px solid #D0CDC0"></div>
<div class="cbtn" style="left:787px;top:373px;width:9px;height:10px"></div>
<div class="a" style="left:647px;top:427px;width:151px;height:12px;background:linear-gradient(#FBFBF8,#F0EFE8);border-radius:2px"></div><div class="t" style="left:648px;top:429px">Resource &#xb7;</div>
<div class="a" style="left:646px;top:440px;width:153px;height:148px;background:#FFFFFF;border:1px solid #A9B8C2"></div>
<svg class="a" style="left:788px;top:430px" width="8" height="8" viewBox="0 0 8 8"><rect x="0" y="0" width="8" height="8" rx="1" fill="#E0603A"/><path d="M2,2 L6,6 M6,2 L2,6" stroke="#FFFFFF" stroke-width="1.4"/></svg><div class="a" style="left:220px;top:199px;width:282px;height:246px;background:#1448B8;border-radius:6px 6px 0 0"></div>
<div class="a" style="left:220px;top:199px;width:282px;height:18px;background:linear-gradient(#3C8CF8 0,#0A5EEA 18%,#0058E6 60%,#0A5AE0 85%,#0548C8 100%);border-radius:6px 6px 0 0"></div>
<div class="t b" style="left:224.5px;top:204.5px;font-size:8px;letter-spacing:0.05px;color:#FFFFFF;transform:scaleY(1.15);transform-origin:0 0">Edit Task</div>
<div class="a" style="left:486px;top:202px;width:13px;height:13px;background:linear-gradient(135deg,#F09878,#D85A30 60%,#C04820);border:1px solid #FFFFFF;border-radius:2px"></div>
<div class="a" style="left:489px;top:208px;width:8px;height:1.6px;background:#fff;transform:rotate(45deg)"></div><div class="a" style="left:489px;top:208px;width:8px;height:1.6px;background:#fff;transform:rotate(-45deg)"></div>
<div class="a" style="left:220px;top:443px;width:282px;height:2px;background:#1A3A9C"></div>
<div class="a" style="left:222px;top:217px;width:278px;height:226px;background:#ECE9D8;border-left:1px solid #DCE4F8"></div>
<div class="a" style="left:227px;top:232px;width:266px;height:183px;background:linear-gradient(#FCFCFE,#F4F3EE);border:1px solid #919B9C;box-shadow:1px 1px 0 #D0CEC4"></div>
<div class="a" style="left:228px;top:223px;width:29px;height:10px;background:linear-gradient(#FEFEFE,#ECEBE6);border:1px solid #919B9C;border-bottom:none;border-radius:2px 2px 0 0"></div>
<div class="t" style="left:228px;width:29px;text-align:center;top:224.5px;letter-spacing:-0.1px">General</div>
<div class="a" style="left:259px;top:223px;width:34px;height:10px;background:linear-gradient(#FEFEFE,#ECEBE6);border:1px solid #919B9C;border-bottom:none;border-radius:2px 2px 0 0"></div>
<div class="t" style="left:259px;width:34px;text-align:center;top:224.5px;letter-spacing:-0.1px">Reminder</div>
<div class="a" style="left:295px;top:223px;width:37px;height:10px;background:linear-gradient(#FEFEFE,#ECEBE6);border:1px solid #919B9C;border-bottom:none;border-radius:2px 2px 0 0"></div>
<div class="t" style="left:295px;width:37px;text-align:center;top:224.5px;letter-spacing:-0.1px">Resources</div>
<div class="a" style="left:334px;top:223px;width:33px;height:10px;background:linear-gradient(#FEFEFE,#ECEBE6);border:1px solid #919B9C;border-bottom:none;border-radius:2px 2px 0 0"></div>
<div class="t" style="left:334px;width:33px;text-align:center;top:224.5px;letter-spacing:-0.1px">Hyperlink</div>
<div class="a" style="left:395px;top:223px;width:25px;height:10px;background:linear-gradient(#FEFEFE,#ECEBE6);border:1px solid #919B9C;border-bottom:none;border-radius:2px 2px 0 0"></div>
<div class="t" style="left:395px;width:25px;text-align:center;top:224.5px;letter-spacing:-0.1px">Info</div>
<div class="a" style="left:368px;top:221px;width:28px;height:12px;background:#FCFCFE;border:1px solid #919B9C;border-top:2px solid #F5B040;border-bottom:none;border-radius:2px 2px 0 0"></div>
<div class="t" style="left:368px;width:28px;text-align:center;top:223.5px">Note</div>
<div class="a" style="left:234px;top:239px;width:251px;height:13px;background:linear-gradient(#F5F4EE,#EAE8DC)"></div>
<div class="a" style="left:238px;top:240px;width:58px;height:11px;background:#FFFFFF"></div>
<div class="t b" style="left:239px;top:242px;font-family:'Liberation Serif',serif;font-size:8px">T</div><div class="t b" style="left:241px;top:243px;font-family:'Liberation Serif',serif;font-size:7px">T</div>
<div class="t" style="left:248px;top:242.5px;font-size:7.4px">Arial</div>
<div class="cbtn" style="left:288px;top:241px;width:8px;height:9px"></div>
<div class="a" style="left:297px;top:240px;width:23px;height:11px;background:#FFFFFF"></div>
<div class="t" style="left:299px;top:242.5px;font-size:7.4px">9</div>
<div class="cbtn" style="left:311px;top:241px;width:8px;height:9px"></div>
<div class="a" style="left:322px;top:241px;width:16px;height:9px;background:#800000"></div>
<div class="a" style="left:339px;top:240px;width:22px;height:11px;background:#FFFFFF"></div>
<div class="t" style="left:340px;top:242.5px;font-size:7.4px">Mar</div>
<div class="cbtn" style="left:353px;top:241px;width:8px;height:9px"></div>
<div class="a" style="left:365px;top:241px;width:1px;height:10px;background:#D8D4C4"></div>
<div class="a" style="left:367px;top:239px;width:15px;height:13px;background:#FFFFFF;border:1px solid #B8C4D0;border-radius:2px"></div>
<div class="a" style="left:370px;top:241px;width:9px;height:9px;background:linear-gradient(#D8ECFC,#A8CCF0);border:1px solid #88B0D8;border-radius:1px"><div class="t" style="left:2px;top:1px;font-size:7px;color:#3060B0;font-weight:bold;font-size:6px">B</div></div>
<div class="a" style="left:385px;top:241px;width:9px;height:9px;background:linear-gradient(#D8ECFC,#C8DCF0);border:1px solid #88B0D8;border-radius:1px"><div class="t" style="left:2px;top:1px;font-size:7px;color:#3060B0;font-style:italic;font-size:6px">I</div></div>
<div class="a" style="left:400px;top:241px;width:9px;height:9px;background:linear-gradient(#D8ECFC,#C8DCF0);border:1px solid #88B0D8;border-radius:1px"><div class="t" style="left:2px;top:1px;font-size:7px;color:#80A0D0;text-decoration:underline;font-size:6px">U</div></div>
<div class="a" style="left:414px;top:241px;width:1px;height:10px;background:#D8D4C4"></div>
<div class="a" style="left:416px;top:239px;width:15px;height:13px;background:#FFFFFF;border:1px solid #B8C4D0;border-radius:2px"></div>
<div class="a" style="left:419px;top:241px;width:10px;height:9px;background:linear-gradient(#90D8B8,#50B080);border:1px solid #78B8A0;border-radius:1px"><div class="a" style="left:1px;top:1px;width:3px;height:1px;background:#fff;box-shadow:0 2px 0 #fff,0 4px 0 #fff"></div></div>
<div class="a" style="left:434px;top:241px;width:10px;height:9px;background:linear-gradient(#D0F0E4,#98D8C0);border:1px solid #78B8A0;border-radius:1px"><div class="a" style="left:3px;top:1px;width:3px;height:1px;background:#fff;box-shadow:0 2px 0 #fff,0 4px 0 #fff"></div></div>
<div class="a" style="left:449px;top:241px;width:10px;height:9px;background:linear-gradient(#D0F0E4,#98D8C0);border:1px solid #78B8A0;border-radius:1px"><div class="a" style="left:5px;top:1px;width:3px;height:1px;background:#fff;box-shadow:0 2px 0 #fff,0 4px 0 #fff"></div></div>
<div class="t b" style="left:477px;top:239px;font-size:9px;letter-spacing:0">&#187;</div>
<div class="dd" style="left:480px;top:248px;border-width:2px 2px 0 2px;border-top-color:#222"></div>
<div class="a" style="left:235px;top:254px;width:250px;height:152px;background:#FFFFFF;border:1px solid #98B0CC"></div>
<div class="t b" style="left:238px;top:258px;font-size:7.3px;letter-spacing:0"><span style="color:#222">1. </span><span style="color:#A01818">Application form</span><span style="color:#181880"> - бланк для заявления</span></div>
<div class="t b" style="left:238px;top:267px;font-size:7.3px;letter-spacing:0"><span style="color:#222">2. </span><span style="color:#A01818">Application for respite</span><span style="color:#181880"> - ходатайство об отсрочке</span></div>
<div class="t b" style="left:238px;top:276px;font-size:7.3px;letter-spacing:0"><span style="color:#222">3. </span><span style="color:#A01818">Application for payment</span><span style="color:#181880"> - письменное требование уплаты</span></div>
<div class="t" style="left:226px;top:426px;font-size:6.8px;letter-spacing:-0.05px">Hint: Use shortcut Ctrl+Tab to switch between</div>
<div class="t" style="left:226px;top:433px;font-size:6.8px">pages</div>
<div class="a" style="left:389px;top:425px;width:46px;height:13px;background:linear-gradient(#FFFFFF,#F0F0EA 70%,#D8D6CC);border:1px solid #5C6E88;border-radius:2px"></div><svg class="a" style="left:402px;top:429px" width="8" height="7" viewBox="0 0 8 7"><polyline points="0.8,3.6 3,5.8 7.4,1" fill="none" stroke="#2E9A2E" stroke-width="1.9"/></svg><div class="t" style="left:413px;top:428px">Ok</div>
<div class="a" style="left:447px;top:425px;width:46px;height:13px;background:linear-gradient(#FFFFFF,#F0F0EA 70%,#D8D6CC);border:1px solid #5C6E88;border-radius:2px"></div><svg class="a" style="left:454px;top:428px" width="8" height="8" viewBox="0 0 8 8"><path d="M1,1 L7,7 M7,1 L1,7" stroke="#D83820" stroke-width="2"/></svg><div class="t" style="left:466px;top:428px">Cancel</div><div class="a" style="left:679px;top:378px;width:113px;height:176px;background:#7D8EDD;border-radius:3px 3px 0 0"></div>
<div class="a" style="left:679px;top:378px;width:113px;height:12px;background:linear-gradient(#9AACEE,#8293E0 40%,#7C8CDC);border-radius:3px 3px 0 0"></div>
<div class="t b" style="left:682px;top:381.5px;font-size:7.4px;letter-spacing:0;color:#D8E2FA">Customization</div>
<div class="a" style="left:780px;top:381px;width:8px;height:8px;background:#D0A0B8;border:1px solid #F0E8F0;border-radius:1px"></div>
<div class="a" style="left:781px;top:384.5px;width:6px;height:1.2px;background:#fff;transform:rotate(45deg)"></div><div class="a" style="left:781px;top:384.5px;width:6px;height:1.2px;background:#fff;transform:rotate(-45deg)"></div>
<div class="a" style="left:682px;top:390px;width:107px;height:161px;background:#ECE9D8"></div>
<div class="a" style="left:683px;top:392px;width:35px;height:13px;background:#FCFCFE;border:1px solid #B0BCC4;border-top:2px solid #F5B040;border-bottom:none;border-radius:2px 2px 0 0"></div>
<div class="t" style="left:688px;top:396px">Columns</div>
<div class="a" style="left:683px;top:404px;width:104px;height:146px;background:#FCFCFE;border:1px solid #B0BCC4"></div>
<div class="a" style="left:684px;top:405px;width:91px;height:11px;background:#ECE9D8;border-right:1px solid #C4C0B0;border-bottom:1px solid #C4C0B0;border-top:1px solid #FAFAF6;overflow:hidden"><div class="t" style="left:2px;top:2px">Actual Time</div></div>
<div class="a" style="left:684px;top:416px;width:91px;height:11px;background:#ECE9D8;border-right:1px solid #C4C0B0;border-bottom:1px solid #C4C0B0;border-top:1px solid #FAFAF6;overflow:hidden"><div class="t" style="left:2px;top:2px">Date Completed</div></div>
<div class="a" style="left:684px;top:427px;width:91px;height:11px;background:#ECE9D8;border-right:1px solid #C4C0B0;border-bottom:1px solid #C4C0B0;border-top:1px solid #FAFAF6;overflow:hidden"><div class="t" style="left:2px;top:2px">Date Created</div></div>
<div class="a" style="left:684px;top:438px;width:91px;height:11px;background:#ECE9D8;border-right:1px solid #C4C0B0;border-bottom:1px solid #C4C0B0;border-top:1px solid #FAFAF6;overflow:hidden"><div class="t" style="left:2px;top:2px">Date Last Modified</div></div>
<div class="a" style="left:684px;top:449px;width:91px;height:11px;background:#ECE9D8;border-right:1px solid #C4C0B0;border-bottom:1px solid #C4C0B0;border-top:1px solid #FAFAF6;overflow:hidden"><div class="t" style="left:2px;top:2px">Date Opened</div></div>
<div class="a" style="left:684px;top:460px;width:91px;height:11px;background:#ECE9D8;border-right:1px solid #C4C0B0;border-bottom:1px solid #C4C0B0;border-top:1px solid #FAFAF6;overflow:hidden"><div class="t" style="left:2px;top:2px">Days Left</div></div>
<div class="a" style="left:684px;top:471px;width:91px;height:11px;background:#ECE9D8;border-right:1px solid #C4C0B0;border-bottom:1px solid #C4C0B0;border-top:1px solid #FAFAF6;overflow:hidden"><div class="t" style="left:2px;top:2px">Department</div></div>
<div class="a" style="left:684px;top:482px;width:91px;height:11px;background:#ECE9D8;border-right:1px solid #C4C0B0;border-bottom:1px solid #C4C0B0;border-top:1px solid #FAFAF6;overflow:hidden"><div class="t" style="left:2px;top:2px">Due Date</div></div>
<div class="a" style="left:684px;top:493px;width:91px;height:11px;background:#ECE9D8;border-right:1px solid #C4C0B0;border-bottom:1px solid #C4C0B0;border-top:1px solid #FAFAF6;overflow:hidden"><div class="t" style="left:2px;top:2px">Estimated Time</div></div>
<div class="a" style="left:684px;top:504px;width:91px;height:12px;background:#ECE9D8;border-right:1px solid #C4C0B0;border-bottom:1px solid #C4C0B0;border-top:1px solid #FAFAF6;overflow:hidden"><div class="t" style="left:2px;top:2px">Hyperlink</div></div>
<div class="a" style="left:684px;top:516px;width:91px;height:11px;background:#ECE9D8;border-right:1px solid #C4C0B0;border-bottom:1px solid #C4C0B0;border-top:1px solid #FAFAF6;overflow:hidden"><div class="t" style="left:2px;top:2px">Info</div></div>
<div class="a" style="left:684px;top:527px;width:91px;height:11px;background:#ECE9D8;border-right:1px solid #C4C0B0;border-bottom:1px solid #C4C0B0;border-top:1px solid #FAFAF6;overflow:hidden"><div class="t" style="left:2px;top:2px">Reminder Time</div></div>
<div class="a" style="left:684px;top:538px;width:91px;height:10px;background:#ECE9D8;border-right:1px solid #C4C0B0;border-bottom:1px solid #C4C0B0;border-top:1px solid #FAFAF6;overflow:hidden"><div class="t" style="left:2px;top:2px">Resources</div></div>
<div class="a" style="left:775px;top:405px;width:11px;height:143px;background:#F4F4F0"></div>
<div class="a" style="left:776px;top:406px;width:9px;height:10px;background:linear-gradient(#D8E4FC,#B8CCF4);border-radius:1px"></div>
<div class="a" style="left:779px;top:410px;width:3px;height:3px;border-left:1.2px solid #4D6185;border-top:1.2px solid #4D6185;transform:rotate(45deg)"></div>
<div class="a" style="left:776px;top:417px;width:9px;height:111px;background:linear-gradient(to right,#B8CCF8,#C8D8FC 50%,#B0C4F4);border-radius:1px"></div>
<div class="a" style="left:776px;top:537px;width:9px;height:10px;background:linear-gradient(#D8E4FC,#B8CCF4);border-radius:1px"></div>
<div class="a" style="left:779px;top:540px;width:3px;height:3px;border-right:1.2px solid #4D6185;border-bottom:1.2px solid #4D6185;transform:rotate(45deg)"></div>
</body></html>
